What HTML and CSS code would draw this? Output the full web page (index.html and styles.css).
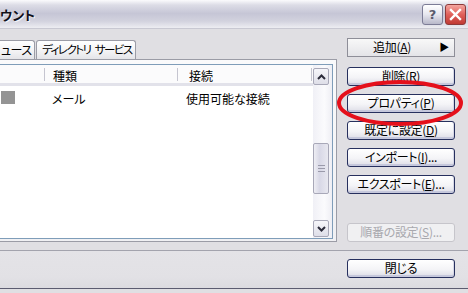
FILE: index.html
```html
<!DOCTYPE html>
<html lang="ja">
<head>
<meta charset="UTF-8" />
<meta name="viewport" content="width=device-width, initial-scale=1.0" />
<title>アカウント</title>
<link rel="stylesheet" href="styles.css">
</head>
<body>
<div class="window">
  <div class="titlebar">
    <span class="title">ウント</span>
    <div class="caption-btns">
      <div class="cap-btn help">?</div>
      <div class="cap-btn close">
        <svg width="13" height="13" viewBox="0 0 13 13"><path d="M2 2 L11 11 M11 2 L2 11" stroke="#fff" stroke-width="2.4" stroke-linecap="square"/></svg>
      </div>
    </div>
  </div>

  <div class="content">
    <div class="left">
      <div class="tabs">
        <div class="tab first">ュース</div>
        <div class="tab second">ディレクトリ サービス</div>
      </div>
      <div class="tabpage">
        <div class="list">
          <div class="list-main">
            <div class="list-header">
              <div class="col c1"></div>
              <div class="col c2">種類</div>
              <div class="col c3">接続</div>
            </div>
            <div class="list-row">
              <div class="col c1"><span class="row-icon"></span></div>
              <div class="col c2">メール</div>
              <div class="col c3">使用可能な接続</div>
            </div>
          </div>
          <div class="scrollbar">
            <div class="sb-btn">
              <svg width="9" height="6" viewBox="0 0 9 6"><path d="M1 5 L4.5 1.5 L8 5" fill="none" stroke="#2b2b3a" stroke-width="2"/></svg>
            </div>
            <div class="sb-track">
              <div class="sb-thumb"><span class="grip"></span></div>
            </div>
            <div class="sb-btn">
              <svg width="9" height="6" viewBox="0 0 9 6"><path d="M1 1 L4.5 4.5 L8 1" fill="none" stroke="#2b2b3a" stroke-width="2"/></svg>
            </div>
          </div>
        </div>
      </div>
    </div>

    <div class="right">
      <div class="btn flat add">追加(<u>A</u>)<span class="arrow">▶</span></div>
      <div class="btn first-group">削除(<u>R</u>)</div>
      <div class="btn">プロパティ(<u>P</u>)</div>
      <div class="btn">既定に設定(<u>D</u>)</div>
      <div class="btn">インポート(<u>I</u>)...</div>
      <div class="btn">エクスポート(<u>E</u>)...</div>
      <div class="btn disabled">順番の設定(<u>S</u>)...</div>
    </div>
  </div>

  <div class="footer">
    <div class="btn close-btn">閉じる</div>
  </div>
</div>

<svg class="highlight" width="130" height="52" viewBox="0 0 130 52">
  <ellipse cx="64" cy="24" rx="61" ry="21" fill="none" stroke="#e5101b" stroke-width="4"/>
</svg>
</body>
</html>
```

FILE: styles.css
```css
body {
  margin: 0;
  width: 468px;
  height: 293px;
  overflow: hidden;
  background: #e0dfe3;
  font-family: "Noto Sans CJK JP", "Noto Sans", sans-serif;
  font-size: 12px;
  font-feature-settings: "palt";
  color: #000;
  position: relative;
}

.titlebar {
  height: 29px;
  box-sizing: border-box;
  display: flex;
  align-items: center;
  justify-content: space-between;
  background: linear-gradient(#fbfbfd 0%, #dcdce6 18%, #c6c6d6 48%, #d2d2de 75%, #ededf2 100%);
  border-bottom: 1px solid #c8c8d2;
}
.title {
  font-weight: bold;
  font-size: 13px;
  margin-left: 0;
  color: #10101a;
  text-shadow: 1px 1px 0 #f4f4f8;
}
.caption-btns {
  display: flex;
  gap: 2px;
  margin-right: 2px;
  margin-top: 1px;
}
.cap-btn {
  width: 21px;
  height: 21px;
  box-sizing: border-box;
  border-radius: 3px;
  display: flex;
  align-items: center;
  justify-content: center;
}
.cap-btn.help {
  border: 1px solid #7c7c96;
  background: linear-gradient(#ffffff, #e6e6ee 50%, #b8b8ca);
  color: #5a5a6c;
  font-family: "DejaVu Sans", sans-serif;
  font-weight: bold;
  font-size: 13px;
}
.cap-btn.close {
  border: 1px solid #8c3a3a;
  background: linear-gradient(#f4a6a0, #e0605a 50%, #c03a34);
}

.content {
  display: flex;
  height: 221px;
}

.left {
  width: 347px;
  margin-left: -10px;
  padding-top: 11px;
  box-sizing: border-box;
}
.tabs {
  display: flex;
  height: 19px;
  padding-left: 4px;
}
.tab {
  box-sizing: border-box;
  height: 19px;
  line-height: 17px;
  border: 1px solid #9b9ca6;
  border-bottom: none;
  border-radius: 3px 3px 0 0;
  background: linear-gradient(#ffffff, #f2f2f4 60%, #e4e4e8);
  margin-right: 1px;
  white-space: nowrap;
}
.tab.first {
  width: 41px;
  padding-left: 6px;
  letter-spacing: -0.5px;
}
.tab.second {
  width: 100px;
  padding-left: 5px;
  font-size: 11.5px;
  letter-spacing: -1.5px;
  word-spacing: 3px;
}
.tabpage {
  height: 183px;
  box-sizing: border-box;
  border: 1px solid #9b9ca6;
  background: linear-gradient(#fafafb, #f0f0f3);
  padding: 4px 3px 0 0;
}

.list {
  height: 175px;
  box-sizing: border-box;
  border: 1px solid #7f9db9;
  background: #fff;
  display: flex;
}
.list-main {
  flex: 1;
}
.list-header {
  display: flex;
  height: 21px;
  box-sizing: border-box;
  border-bottom: 3px solid #e2e2ea;
  background: #fbfbfc;
}
.list-header .col {
  border-right: 1px solid #c5c5d0;
  margin: 3px 0 2px;
  line-height: 13px;
  padding-top: 1px;
}
.list-row {
  display: flex;
  height: 18px;
  margin-top: 5px;
  line-height: 16px;
}
.col {
  box-sizing: border-box;
  white-space: nowrap;
}
.c1 { width: 53px; padding-left: 10px; }
.c2 { width: 133px; padding-left: 8px; }
.c3 { width: 134px; padding-left: 11px; }
.list-row .c2 { padding-left: 7px; }
.list-row .c3 { padding-left: 8px; }
.row-icon {
  display: inline-block;
  width: 14px;
  height: 13px;
  background: #949494;
  margin-left: -1px;
  vertical-align: top;
}

.scrollbar {
  width: 19px;
  box-sizing: border-box;
  padding: 3px 3px 1px 0;
  display: flex;
  flex-direction: column;
  background: linear-gradient(90deg, #f0f0f6, #fbfbfd 60%, #eeeef4);
}
.sb-btn {
  height: 17px;
  box-sizing: border-box;
  border: 1px solid #a8a8b8;
  border-radius: 2px;
  background: linear-gradient(#f6f6fa, #dedee8);
  display: flex;
  align-items: center;
  justify-content: center;
}
.sb-track {
  flex: 1;
  padding-top: 58px;
}
.sb-thumb {
  height: 51px;
  box-sizing: border-box;
  border: 1px solid #a8a8b8;
  border-radius: 2px;
  background: linear-gradient(90deg, #eeeef4, #d8d8e6 40%, #e8e8f0);
  display: flex;
  align-items: center;
  justify-content: center;
}
.grip {
  width: 7px;
  height: 5px;
  border-top: 1px solid #9a9aaa;
  border-bottom: 1px solid #9a9aaa;
  position: relative;
}
.grip::after {
  content: "";
  position: absolute;
  left: 0;
  right: 0;
  top: 2px;
  border-top: 1px solid #9a9aaa;
}

.right {
  width: 108px;
  margin-left: 10px;
  padding-top: 9px;
  display: flex;
  flex-direction: column;
  gap: 8px;
}
.btn {
  height: 19px;
  box-sizing: border-box;
  border: 1px solid #27305e;
  border-radius: 3px;
  background: linear-gradient(#ffffff, #f4f4f7 55%, #dcdce6);
  box-shadow: inset 0 -2px 0 #c6c8dc, inset -1px 0 0 #d6d8e6;
  text-align: center;
  line-height: 16px;
  white-space: nowrap;
  letter-spacing: -0.3px;
}
.btn u {
  text-underline-offset: 1px;
}
.btn.add {
  position: relative;
  border: 1px solid #8e8e98;
  border-radius: 0;
  background: linear-gradient(#f8f8f8, #e4e4e8);
  box-shadow: none;
  padding-right: 18px;
}
.arrow {
  position: absolute;
  right: 5px;
  top: 0;
  font-size: 10px;
}
.btn.first-group {
  margin-top: 2px;
}
.btn.disabled {
  margin-top: 21px;
  border-color: #c6c5cb;
  background: #f0f0f2;
  box-shadow: none;
  color: #a8a8ae;
}

.footer {
  height: 39px;
  box-sizing: border-box;
  border-top: 1px solid #a3a3ad;
  border-bottom: 1px solid #5c5c70;
  background: linear-gradient(#e4e3e7, #e2e1e5 70%, #dcdbe0);
  display: flex;
  justify-content: flex-end;
  padding: 8px 13px 0 0;
}
.close-btn {
  width: 108px;
}

.highlight {
  position: absolute;
  left: 336px;
  top: 79px;
}
```
